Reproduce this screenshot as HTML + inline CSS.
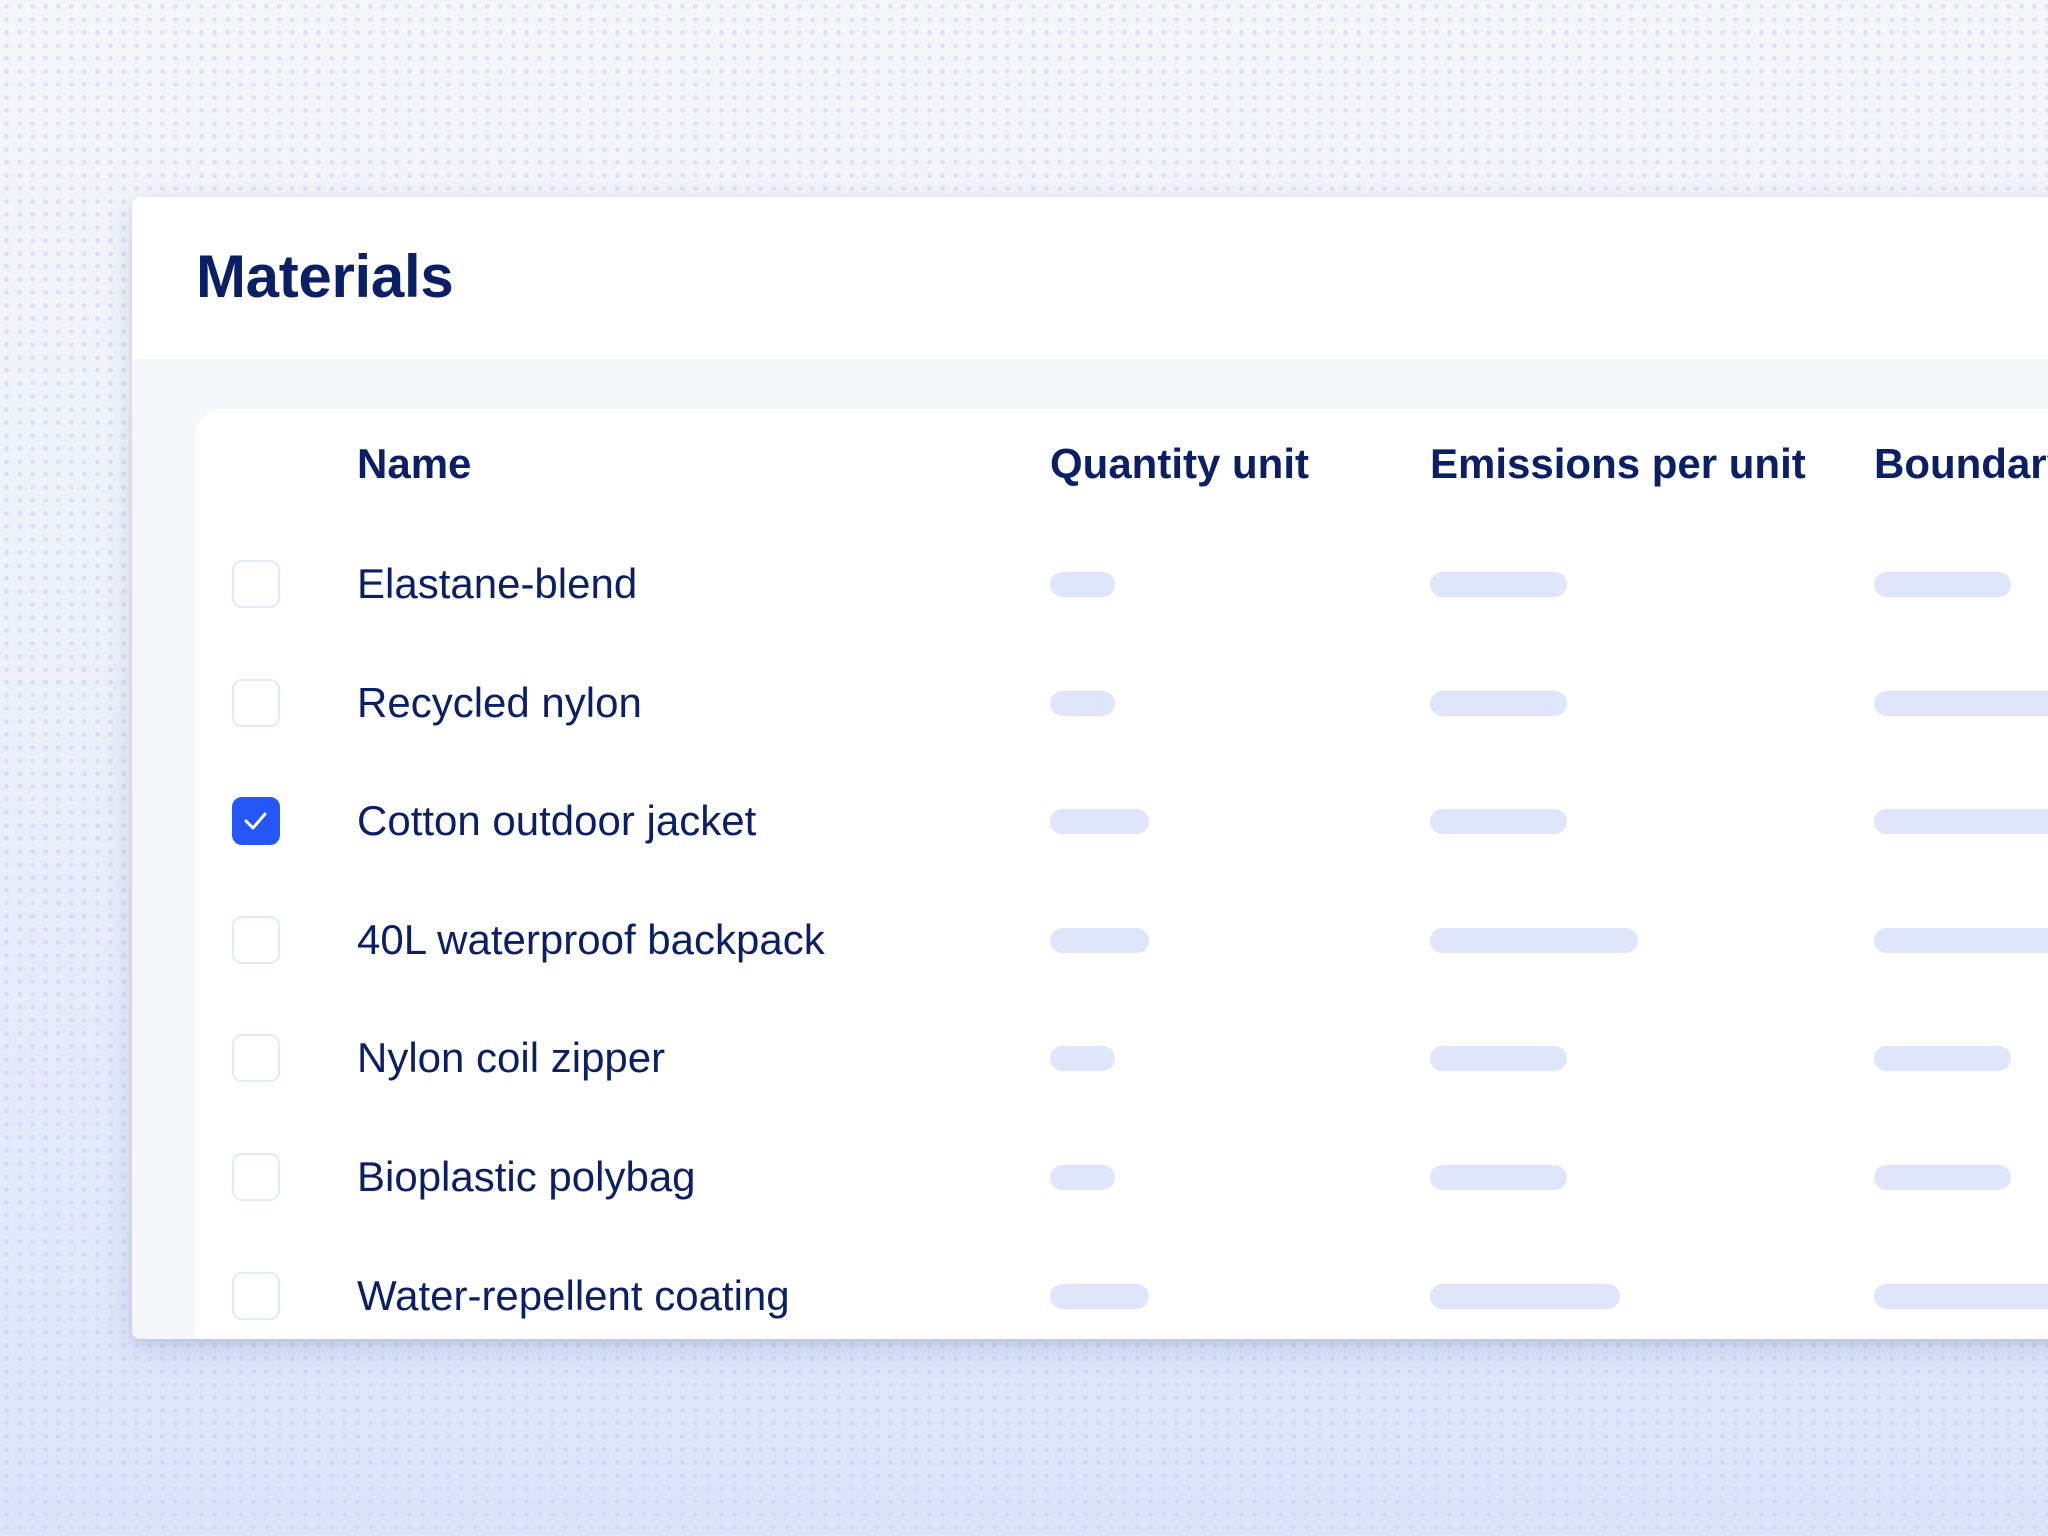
<!DOCTYPE html>
<html><head><meta charset="utf-8"><style>
*{margin:0;padding:0;box-sizing:border-box}
html,body{width:2048px;height:1536px;overflow:hidden}
body{position:relative;font-family:"Liberation Sans",sans-serif;color:#0b1f66;
background:
radial-gradient(circle,rgba(190,205,245,.45) 2.2px,transparent 2.8px) 0 0/13px 13px,
linear-gradient(180deg,#f5f6fa 0%,#eef1f9 40%,#dbe4fb 100%);}
.card{position:absolute;left:132px;top:197px;width:1940px;height:1142px;background:#f5f6fa;border-radius:8px 0 0 8px;box-shadow:0 10px 30px rgba(60,80,140,.18),0 2px 6px rgba(60,80,140,.1);overflow:hidden}
.head{position:absolute;left:0;top:0;right:0;height:162px;background:#fff}
.title{position:absolute;left:64px;top:45px;font-size:60px;font-weight:700;letter-spacing:-0.3px}
.table{position:absolute;left:63px;top:212px;right:0;bottom:0;background:#fff;border-radius:26px 0 0 0}
.th{position:absolute;top:31px;font-size:42px;font-weight:700;white-space:nowrap}
.row{position:absolute;left:0;right:0;height:60px}
.cb{position:absolute;left:37px;top:6px;width:48px;height:48px;border:2.5px solid #e4eafb;border-radius:10px;background:#fff}
.cb.on{background:#2457f5;border-color:#2457f5}
.nm{position:absolute;left:162px;top:6px;font-size:42px;white-space:nowrap}
.bar{position:absolute;top:18px;height:25px;border-radius:13px;background:#dfe6fb}
</style></head><body>
<div class="card">
<div class="head"><div class="title">Materials</div></div>
<div class="table">
<div class="th" style="left:162px">Name</div>
<div class="th" style="left:855px">Quantity unit</div>
<div class="th" style="left:1235px">Emissions per unit</div>
<div class="th" style="left:1679px">Boundary</div>

<div class="row" style="top:145px"><div class="cb"></div><div class="nm">Elastane-blend</div><div class="bar" style="left:855px;width:65px"></div><div class="bar" style="left:1235px;width:137px"></div><div class="bar" style="left:1679px;width:137px"></div></div>
<div class="row" style="top:264px"><div class="cb"></div><div class="nm">Recycled nylon</div><div class="bar" style="left:855px;width:65px"></div><div class="bar" style="left:1235px;width:137px"></div><div class="bar" style="left:1679px;width:300px"></div></div>
<div class="row" style="top:382px"><div class="cb on"><svg width="43" height="43" viewBox="0 0 43 43" style="position:absolute;left:0;top:0"><path d="M12 22 L19 29 L31 15" stroke="#fff" stroke-width="3" fill="none" stroke-linecap="round" stroke-linejoin="round"/></svg></div><div class="nm">Cotton outdoor jacket</div><div class="bar" style="left:855px;width:99px"></div><div class="bar" style="left:1235px;width:137px"></div><div class="bar" style="left:1679px;width:300px"></div></div>
<div class="row" style="top:501px"><div class="cb"></div><div class="nm">40L waterproof backpack</div><div class="bar" style="left:855px;width:99px"></div><div class="bar" style="left:1235px;width:208px"></div><div class="bar" style="left:1679px;width:300px"></div></div>
<div class="row" style="top:619px"><div class="cb"></div><div class="nm">Nylon coil zipper</div><div class="bar" style="left:855px;width:65px"></div><div class="bar" style="left:1235px;width:137px"></div><div class="bar" style="left:1679px;width:137px"></div></div>
<div class="row" style="top:738px"><div class="cb"></div><div class="nm">Bioplastic polybag</div><div class="bar" style="left:855px;width:65px"></div><div class="bar" style="left:1235px;width:137px"></div><div class="bar" style="left:1679px;width:137px"></div></div>
<div class="row" style="top:857px"><div class="cb"></div><div class="nm">Water-repellent coating</div><div class="bar" style="left:855px;width:99px"></div><div class="bar" style="left:1235px;width:190px"></div><div class="bar" style="left:1679px;width:300px"></div></div>
</div>
</div>
</body></html>
